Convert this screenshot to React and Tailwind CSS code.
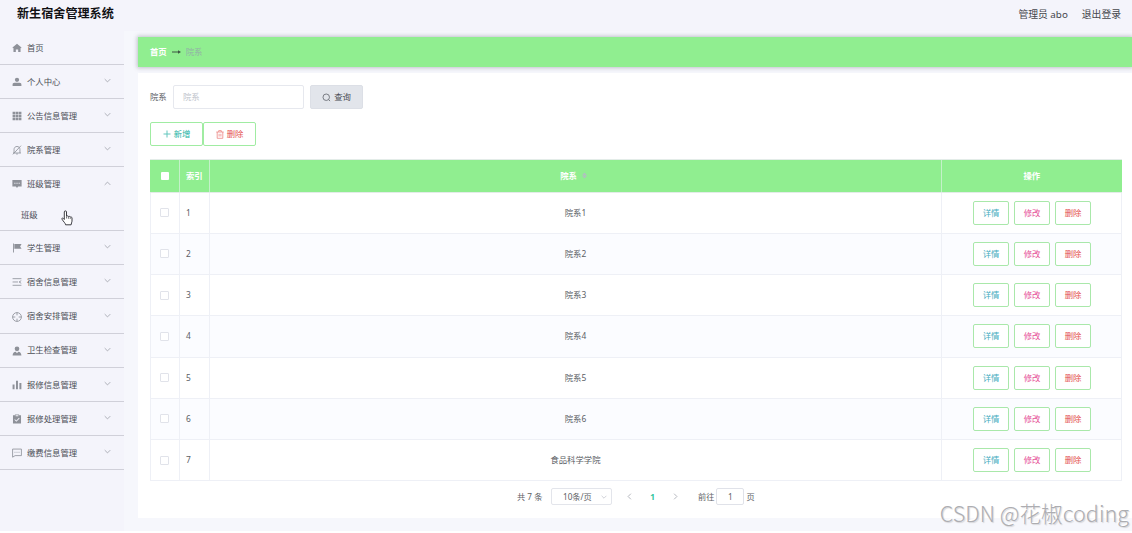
import React from 'react';

const solid = {
  home: <path d="M512 70 50 470l50 60 50-40v440h240V660h244v270h240V490l50 40 50-60z" />,
  user: <path d="M512 70a220 220 0 1 1 0 440 220 220 0 0 1 0-440zM60 930V790c0-110 70-190 190-190h524c120 0 190 80 190 190v140z" />,
  grid: <path d="M60 80h270v240H60zM377 80h270v240H377zM694 80h270v240H694zM60 390h270v240H60zM377 390h270v240H377zM694 390h270v240H694zM60 700h270v240H60zM377 700h270v240H377zM694 700h270v240H694z" />,
  chat: <path fillRule="evenodd" d="M40 110h944v660H620L512 930 404 770H40zM240 390v100h110V390zm220 0v100h110V390zm220 0v100h110V390z" />,
  flag: <path d="M110 60h90v900h-90zM240 110h740l-150 240 150 250H240z" />,
  person: <path d="M512 50a240 240 0 1 1 0 480 240 240 0 0 1 0-480zM60 960c10-240 130-370 320-380l132 160 132-160c190 10 310 140 320 380z" />,
  bars: <path d="M60 460h200v490H60zM410 70h200v880H410zM760 300h200v650H760z" />,
  clip: <path fillRule="evenodd" d="M100 120h200V50h424v70h200v860H100zM370 130v90h284v-90zM300 540l-55 60 200 190 330-340-58-56-274 280z" />,
};

const outline = {
  bell: <path d="M110 820h804M210 820V460c0-180 120-310 302-310s302 130 302 310v360M430 920h164M920 70 90 960" />,
  list: <path d="M60 170h904M60 510h560M60 850h904M944 380 720 510l224 130" />,
  aim: <path d="M512 60a452 452 0 1 1 0 904 452 452 0 0 1 0-904zM512 60v280M512 684v280M60 512h280M684 512h280" />,
  message: <path d="M60 110h904v670H320L60 940zM260 440h90M467 440h90M674 440h90" />,
};

function MenuIcon({ name }) {
  if (solid[name]) {
    return <svg viewBox="0 0 1024 1024" className="h-[10px] w-[10px] shrink-0 fill-[#8e9199]">{solid[name]}</svg>;
  }
  return (
    <svg viewBox="0 0 1024 1024" className="h-[10px] w-[10px] shrink-0 fill-none stroke-[#8e9199] stroke-[85]">
      {outline[name]}
    </svg>
  );
}

function Chevron({ className }) {
  return (
    <svg viewBox="0 0 10 10" className={className} fill="none" strokeWidth="1.1">
      <path d="M1 3l4 4 4-4" />
    </svg>
  );
}

const menu = [
  ['user', '个人中心'],
  ['grid', '公告信息管理'],
  ['bell', '院系管理'],
  ['chat', '班级管理', '班级'],
  ['flag', '学生管理'],
  ['list', '宿舍信息管理'],
  ['aim', '宿舍安排管理'],
  ['person', '卫生检查管理'],
  ['bars', '报修信息管理'],
  ['clip', '报修处理管理'],
  ['message', '缴费信息管理'],
];

const rows = ['院系1', '院系2', '院系3', '院系4', '院系5', '院系6', '食品科学学院'];

function HandCursor() {
  return (
    <svg viewBox="0 0 12 16" className="ml-[23px] mt-[5px] h-[16px] w-[12px]" fill="#fff" stroke="#3c3c42" strokeWidth="1" strokeLinejoin="round">
      <path d="M3.300 9.500V2a1.100 1.100 0 0 1 2.200 0v4.200c.3-.6 1.800-.5 1.900.4.4-.5 1.700-.3 1.800.5.5-.4 1.800-.2 1.800.9v3.200c0 1.300-.9 2-.9 3.600H4.600C4.400 13 2.400 11.700 1 9.200c-.5-1 .6-1.500 1.300-.8z" />
      <path d="M5.500 6.500v2M7.400 6.800v2M9.200 7.300v1.700" strokeWidth=".7" />
    </svg>
  );
}

function Sidebar() {
  return (
    <aside className="w-[124px] shrink-0 bg-[#f4f4fb] text-[#4b4e56]">
      <div className="flex h-[34px] items-center gap-[5px] border-b border-[#d0d0d9] pl-[12px] pt-px">
        <MenuIcon name="home" />
        <span>首页</span>
      </div>
      {menu.map(([icon, label, child]) => (
        <div key={label} className="border-b border-[#d0d0d9]">
          <div className={child ? 'flex h-[34px] items-center pl-[12px] pr-[13px]' : 'flex h-[33.1px] items-center pl-[12px] pr-[13px] pt-px'}>
            <MenuIcon name={icon} />
            <span className="ml-[5px] flex-1">{label}</span>
            <Chevron className={child ? 'mb-[1px] h-[7px] w-[7px] rotate-180 stroke-[#9a9ca5]' : 'mb-[3px] h-[7px] w-[7px] stroke-[#9a9ca5]'} />
          </div>
          {child && (
            <div className="flex h-[29px] items-center pb-px pl-[21px]">
              <span>{child}</span>
              <HandCursor />
            </div>
          )}
        </div>
      ))}
    </aside>
  );
}

function Row({ index, name }) {
  return (
    <div className={index % 2 ? 'grid h-[41.25px] grid-cols-[30px_30px_732px_1fr] border-b border-[#eef0f6] bg-white' : 'grid h-[41.25px] grid-cols-[30px_30px_732px_1fr] border-b border-[#eef0f6] bg-[#fbfcff]'}>
      <div className="flex items-center justify-center border-l border-r border-[#eef0f6] pr-px">
        <span className="h-[9px] w-[9px] rounded-[1px] border border-[#e1e3ea] bg-white" />
      </div>
      <div className="flex items-center border-r border-[#eef0f6] pl-[6px]">{index}</div>
      <div className="flex items-center justify-center border-r border-[#eef0f6]">{name}</div>
      <div className="flex items-center justify-center gap-[5px] border-r border-[#eef0f6] pl-[1.500px]">
        <button className="h-[24px] w-[36px] rounded-[2px] border border-[#a9e8aa] bg-white text-[#45adc0]">详情</button>
        <button className="h-[24px] w-[36px] rounded-[2px] border border-[#a9e8aa] bg-white text-[#e65398]">修改</button>
        <button className="h-[24px] w-[36px] rounded-[2px] border border-[#a9e8aa] bg-white text-[#e4514f]">删除</button>
      </div>
    </div>
  );
}

function Table() {
  return (
    <div className="mr-[10.500px] mt-[13px]">
      <div className="grid h-[33.600px] grid-cols-[30px_30px_732px_1fr] border-b border-t border-[#e3ece8] bg-[#90ee90] font-bold text-white">
        <div className="flex items-center justify-center border-r border-[#c4f1c9]">
          <span className="h-[8px] w-[8px] rounded-[1px] bg-white" />
        </div>
        <div className="flex items-center border-r border-[#c4f1c9] pl-[6px]">索引</div>
        <div className="flex items-center justify-center gap-[5px] border-r border-[#c4f1c9] pr-[4px]">
          院系
          <svg viewBox="0 0 6 8" className="h-[7px] w-[5px] shrink-0" fill="#b0c0c0">
            <path d="M0 3.700 3 .3l3 3.400zM0 4.300h6l-3 3.400z" />
          </svg>
        </div>
        <div className="flex items-center justify-center">操作</div>
      </div>
      {rows.map((name, i) => (
        <Row key={name} index={i + 1} name={name} />
      ))}
    </div>
  );
}

function Pagination() {
  return (
    <div className="mt-[7px] flex h-[17px] items-center pl-[367px] text-[8.200px] text-[#606266]">
      <span className="w-[34px] whitespace-nowrap">共 7 条</span>
      <div className="flex h-[17px] w-[61px] items-center justify-between rounded-[2px] border border-[#e3e5eb] pl-[11px] pr-[4px]">
        10条/页
        <Chevron className="h-[6px] w-[6px] stroke-[#b9bcc5]" />
      </div>
      <Chevron className="ml-[14px] h-[7px] w-[7px] rotate-90 stroke-[#a0a3ac]" />
      <span className="w-[39px] text-center font-bold text-[#2dc49c]">1</span>
      <Chevron className="h-[7px] w-[7px] -rotate-90 stroke-[#a0a3ac]" />
      <span className="ml-[19px]">前往</span>
      <div className="ml-[2px] flex h-[17px] w-[28px] items-center justify-center rounded-[2px] border border-[#e0e2e9]">1</div>
      <span className="ml-[2px]">页</span>
    </div>
  );
}

export default function App() {
  return (
    <div className="relative flex h-[533px] w-[1132px] flex-col overflow-hidden bg-white pb-[2px] font-['Noto_Sans','Noto_Sans_CJK_SC',sans-serif] text-[8.4px] leading-none text-[#5b5e65]">
      <header className="flex h-[31px] shrink-0 items-center bg-[#f4f4fb] pb-[2px] pl-[17px] pr-[11px]">
        <h1 className="flex-1 text-[12.1px] font-bold text-[#111114]">新生宿舍管理系统</h1>
        <span className="mr-[14px] text-[9.800px] text-[#44464c]">管理员 abo</span>
        <span className="text-[9.800px] text-[#44464c]">退出登录</span>
      </header>
      <div className="flex min-h-0 flex-1">
        <Sidebar />
        <main className="flex-1 bg-[#f6f7fc] pl-[14px] pt-[6px]">
          <nav className="flex h-[30px] items-center bg-[#90ee90] pl-[12px] shadow-[0_0_4px_1px_rgba(70,70,90,0.3)]">
            <span className="font-bold text-white">首页</span>
            <svg viewBox="0 0 9 6" className="mx-[5px] h-[6px] w-[9px]">
              <path d="M0 3h7" fill="none" stroke="#3d5543" />
              <path d="M6 1.200 9 3 6 4.800z" fill="#3d5543" />
            </svg>
            <span className="text-[#93b3a7]">院系</span>
          </nav>
          <section className="mt-[6px] h-[445px] bg-white pl-[12px] pt-[12px]">
            <div className="flex h-[24px] items-center">
              <span className="w-[23px]">院系</span>
              <div className="flex h-[24px] w-[131px] items-center rounded-[2px] border border-[#e6e8ee] pl-[9px] text-[#c0c4cc]">院系</div>
              <button className="ml-[6px] flex h-[24px] w-[53px] items-center justify-center gap-[3px] rounded-[2px] border border-[#dcdfe6] bg-[#e2e5eb] text-[#4a4d54]">
                <svg viewBox="0 0 10 10" className="h-[9px] w-[9px] fill-none stroke-[#6d7078]">
                  <circle cx="4.700" cy="4.700" r="3.600" />
                  <path d="M7.300 7.300 9 9" />
                </svg>
                查询
              </button>
            </div>
            <div className="mt-[13px] flex h-[24px]">
              <button className="flex w-[53px] items-center justify-center gap-[3px] rounded-[2px] border border-[#a0eca2] text-[#25b3a5]">
                <svg viewBox="0 0 8 8" className="h-[8px] w-[8px] fill-none stroke-[#62c6bd]">
                  <path d="M4 .5v7M.5 4h7" />
                </svg>
                新增
              </button>
              <button className="flex w-[53px] items-center justify-center gap-[3px] rounded-[2px] border border-[#a0eca2] text-[#e4514f]">
                <svg viewBox="0 0 8 9" className="h-[9px] w-[8px] fill-none stroke-[#ec8583] stroke-[.8]">
                  <path d="M.3 2h7.400M1.200 2v6.300h5.600V2M2.700 2V.6h2.600V2M3.100 3.800v2.700M4.900 3.800v2.700" />
                </svg>
                删除
              </button>
            </div>
            <Table />
            <Pagination />
          </section>
        </main>
      </div>
      <div className="absolute bottom-[9px] right-[3px] whitespace-nowrap font-['Noto_Sans_CJK_SC',sans-serif] text-[21.600px] font-light text-[#adadb1] [text-shadow:-1px_-1px_0_#fff,1px_1px_1px_#d5d5d8]">
        CSDN @花椒coding
      </div>
    </div>
  );
}
